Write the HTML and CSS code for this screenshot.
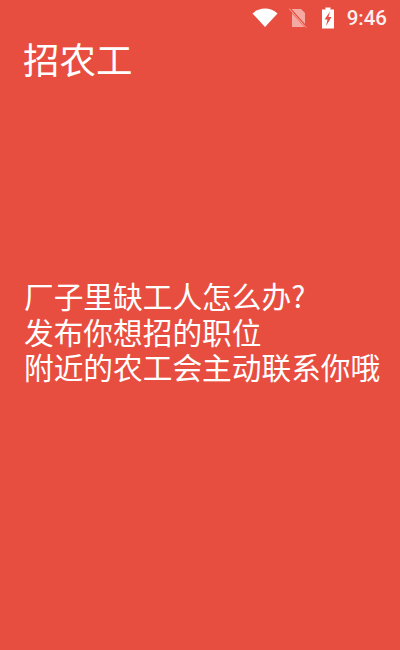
FILE: index.html
```html
<!DOCTYPE html>
<html lang="zh-CN">
<head>
  <meta charset="UTF-8">
  <meta name="viewport" content="width=device-width, initial-scale=1.0">
  <title>招农工</title>
  <link rel="stylesheet" href="styles.css">
</head>
<body>

  <!-- Status Bar -->
  <div class="status-bar">
    <svg class="icon-wifi" width="26" height="19" viewBox="0 0 26 19">
      <path d="M0.500 5.500C4 2.200 8.300 0.500 13 0.500s9 1.700 12.500 5L13 19z" fill="#fff"/>
    </svg>
    <svg class="icon-sim" width="18" height="20" viewBox="0 0 18 20">
      <path d="M3 1h9l4 4v14H3z" fill="#f4a9a2"/>
      <path d="M0 0l18 20" stroke="#e84e40" stroke-width="2.500"/>
      <path d="M0 0.500l17 19" stroke="#f4a9a2" stroke-width="1"/>
    </svg>
    <svg class="icon-battery" width="14" height="22" viewBox="0 0 14 22">
      <path d="M4.500 0.500h5v2h3.500v19H1v-19h3.500z" fill="#fff"/>
      <path d="M9 4.500L3.500 12.500h3L5 19l5.500-9H7.500z" fill="#e84e40"/>
    </svg>
    <span class="clock">9:46</span>
  </div>

  <!-- Title -->
  <h1 class="title">招农工</h1>

  <!-- Message -->
  <p class="message">
    厂子里缺工人怎么办?<br>
    发布你想招的职位<br>
    附近的农工会主动联系你哦
  </p>

</body>
</html>
```

FILE: styles.css
```css
/* General Styles */
body {
  margin: 0;
  width: 400px;
  height: 650px;
  overflow: hidden;
  background-color: #e84e40;
  color: #fff;
  font-family: "Noto Sans CJK SC", "Roboto", sans-serif;
}

.status-bar {
  display: flex;
  justify-content: flex-end;
  align-items: center;
  height: 35px;
  padding-right: 13px;
}

.icon-wifi {
  margin-right: 11px;
}

.icon-sim {
  margin-right: 14px;
}

.icon-battery {
  margin-right: 12px;
}

.clock {
  font-family: "Roboto", sans-serif;
  font-size: 20.500px;
  font-weight: 500;
  color: #fdf0ee;
}

.title {
  margin: 0;
  padding-left: 23px;
  font-size: 36.500px;
  font-weight: 400;
  line-height: 48px;
}

.message {
  margin: 195px 0 0;
  padding-left: 24px;
  font-size: 29.700px;
  line-height: 35.500px;
}
```
